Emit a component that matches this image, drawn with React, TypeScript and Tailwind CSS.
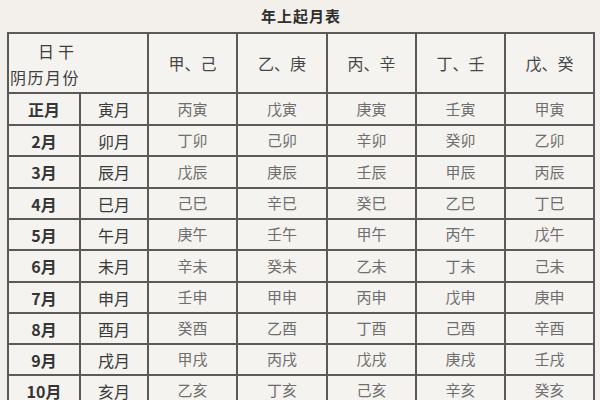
import React from "react";

const heads = ["甲、己", "乙、庚", "丙、辛", "丁、壬", "戊、癸"];
const rows: [string, string, string[]][] = [
  ["正月", "寅月", ["丙寅", "戊寅", "庚寅", "壬寅", "甲寅"]],
  ["2月", "卯月", ["丁卯", "己卯", "辛卯", "癸卯", "乙卯"]],
  ["3月", "辰月", ["戊辰", "庚辰", "壬辰", "甲辰", "丙辰"]],
  ["4月", "巳月", ["己巳", "辛巳", "癸巳", "乙巳", "丁巳"]],
  ["5月", "午月", ["庚午", "壬午", "甲午", "丙午", "戊午"]],
  ["6月", "未月", ["辛未", "癸未", "乙未", "丁未", "己未"]],
  ["7月", "申月", ["壬申", "甲申", "丙申", "戊申", "庚申"]],
  ["8月", "酉月", ["癸酉", "乙酉", "丁酉", "己酉", "辛酉"]],
  ["9月", "戌月", ["甲戌", "丙戌", "戊戌", "庚戌", "壬戌"]],
  ["10月", "亥月", ["乙亥", "丁亥", "己亥", "辛亥", "癸亥"]],
];
const rowH = ["h-[32px]", "h-[31px]", "h-[32px]", "h-[31px]", "h-[31px]", "h-[32px]", "h-[31px]", "h-[31px]", "h-[31px]", "h-[31px]"];

export default function App() {
  return (
    <div
      className="w-[600px] h-[400px] overflow-hidden bg-[#f3f0eb]"
      style={{ fontFamily: '"Noto Sans CJK SC", "Noto Sans", sans-serif' }}
    >
      <div className="h-[32px] flex items-center justify-center pl-[2px] pt-[1px] text-[15px] font-bold text-[#2e2e2e] tracking-[1px]">
        年上起月表
      </div>
      <table className="ml-[7px] w-[587px] table-fixed border-collapse border-2 border-[#5a5a5a] bg-[#f5f3ef]">
        <colgroup>
          <col className="w-[72px]" />
          <col className="w-[68px]" />
          <col className="w-[89px]" />
          <col className="w-[90px]" />
          <col className="w-[89px]" />
          <col className="w-[89px]" />
          <col className="w-[89px]" />
        </colgroup>
        <thead>
          <tr className="h-[60px]">
            <th colSpan={2} className="border-2 border-[#5a5a5a] p-0 text-left font-normal text-[16px] text-[#3e3e3e] align-top">
              <div className="pl-[29px] pt-[4px] leading-[26px] tracking-[4px]">日干</div>
              <div className="pl-[1px] leading-[26px] tracking-[1.5px]">阴历月份</div>
            </th>
            {heads.map((h) => (
              <th key={h} className="border-2 border-[#5a5a5a] p-0 text-center font-normal text-[16px] text-[#474747]">
                {h}
              </th>
            ))}
          </tr>
        </thead>
        <tbody>
          {rows.map(([m, z, cells], i) => (
            <tr key={m} className={rowH[i]}>
              <td className="border-2 border-[#5a5a5a] p-0 text-center font-bold text-[16px] text-[#353535]">{m}</td>
              <td className="border-2 border-[#5a5a5a] p-0 text-center text-[16px] text-[#3a3a3a]">{z}</td>
              {cells.map((c, j) => (
                <td key={j} className="border-2 border-[#5a5a5a] p-0 text-center text-[15px] text-[#6e6e6e]">
                  {c}
                </td>
              ))}
            </tr>
          ))}
        </tbody>
      </table>
    </div>
  );
}
